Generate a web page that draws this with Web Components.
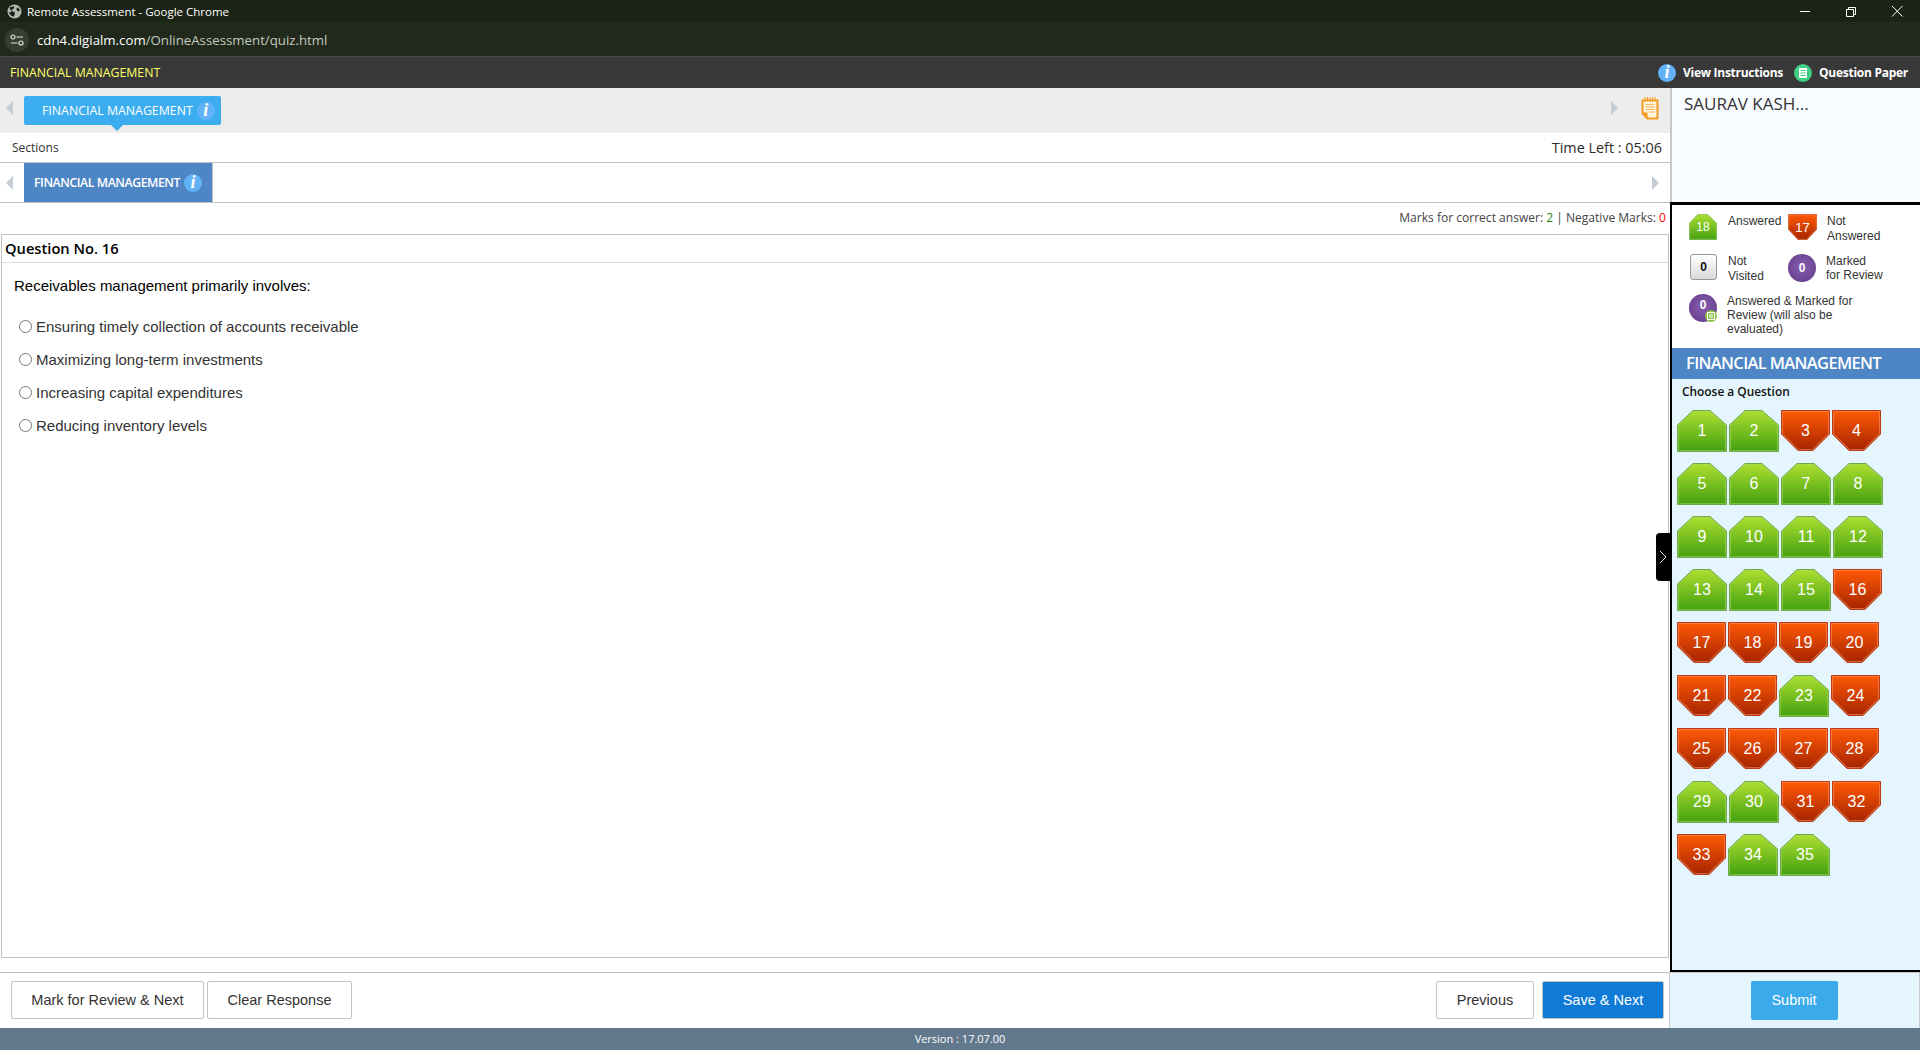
<!DOCTYPE html>
<html lang="en">
<head>
<meta charset="utf-8">
<title>Remote Assessment</title>
<style>
    html, body { margin: 0; height: 100%; }
    body { width: 1920px; height: 1050px; overflow: hidden; display: flex; flex-direction: column; font-family: "Liberation Sans", Arial, sans-serif; background: #fff; }
    .main { display: flex; height: 884px; }
</style>
</head>
<body>
<chrome-bar></chrome-bar>
<exam-header></exam-header>
<div class="main">
    <quiz-pane></quiz-pane>
    <side-panel></side-panel>
</div>
<action-bar></action-bar>
<version-footer></version-footer>

<script>
class ShadowBase extends HTMLElement {
    constructor() {
        super();
        this.attachShadow({ mode: 'open' });
    }
    connectedCallback() {
        this.render();
    }
}

class ChromeBar extends ShadowBase {
    render() {
        this.shadowRoot.innerHTML = `
            <style>
                :host { display: block; font-family: "Open Sans", sans-serif; color: #fff; }
                .title { height: 23px; background: #1a2314; display: flex; align-items: center; padding-left: 7px; font-size: 11.5px; box-sizing: border-box; border-bottom: 1px solid #222b1c; }
                .title span { margin-left: 5px; }
                .win { margin-left: auto; display: flex; }
                .win svg { width: 46px; height: 22px; display: block; }
                .addr { height: 34px; background: #20291b; display: flex; align-items: center; padding-left: 5px; box-sizing: border-box; border-bottom: 1px solid #4a4a4a; }
                .tune { width: 24px; height: 24px; border-radius: 50%; background: #363e31; display: flex; align-items: center; justify-content: center; }
                .url { margin-left: 8px; font-size: 13.25px; color: #c4cabf; }
                .url b { font-weight: 400; color: #fff; }
            </style>
            <div class="title">
                <svg width="15" height="15" viewBox="0 0 16 16"><circle cx="8" cy="8" r="7.5" fill="#b4b8b2"/><path d="M3 3.500c2-1 4-1 5-.5l-1 2-2 1 1 2 2 .5.5 2-1.500 3C4.500 13 2.500 11 2 8.500c1 0 1.500.5 2 .5L5 7 3 5.500z" fill="#1a2314"/><path d="M11 3.500l2.500 2L13 8l-2-.5-1-2z" fill="#1a2314"/></svg>
                <span>Remote Assessment - Google Chrome</span>
                <div class="win">
                    <svg viewBox="0 0 46 22"><path d="M18 11.500h10" stroke="#fff" fill="none"/></svg>
                    <svg viewBox="0 0 46 22"><path d="M18.500 9.500h7v7h-7zM20.500 9.500v-2h7v7h-2" stroke="#fff" fill="none"/></svg>
                    <svg viewBox="0 0 46 22"><path d="M18 6l10.500 10.500M28.500 6L18 16.500" stroke="#fff" fill="none"/></svg>
                </div>
            </div>
            <div class="addr">
                <div class="tune">
                    <svg width="14" height="12" viewBox="0 0 14 12"><circle cx="3" cy="3" r="2" fill="none" stroke="#dfe3dc" stroke-width="1.200"/><path d="M6.500 3H13M1 9h6.500" stroke="#dfe3dc" stroke-width="1.200"/><circle cx="11" cy="9" r="2" fill="none" stroke="#dfe3dc" stroke-width="1.200"/></svg>
                </div>
                <div class="url"><b>cdn4.digialm.com</b>/OnlineAssessment/quiz.html</div>
            </div>`;
    }
}

class InfoDot extends ShadowBase {
    render() {
        this.shadowRoot.innerHTML = `
            <style>
                :host { display: inline-flex; width: 18px; height: 18px; border-radius: 50%; background: #62b2f7; color: #fff; align-items: center; justify-content: center; font: italic bold 18px "Liberation Serif", serif; flex: none; letter-spacing: 0; }
            </style>i`;
    }
}

class ExamHeader extends ShadowBase {
    render() {
        this.shadowRoot.innerHTML = `
            <style>
                :host { display: flex; align-items: center; height: 31px; background: #383838; padding: 0 12px 0 10px; font: 12.3px "Open Sans", sans-serif; color: #ffff66; }
                .right { margin-left: auto; display: flex; align-items: center; color: #fff; font-weight: 700; font-size: 12px; letter-spacing: -.27px; }
                info-dot { margin-right: 7px; }
                .paper { width: 18px; height: 18px; border-radius: 50%; background: #3fcf82; display: flex; align-items: center; justify-content: center; margin: 0 7px 0 11px; }
            </style>
            <span>FINANCIAL MANAGEMENT</span>
            <div class="right">
                <info-dot></info-dot><span>View Instructions</span>
                <span class="paper"><svg width="10" height="10" viewBox="0 0 10 10"><path fill="#fff" d="M1 0h8v10H1z"/><path stroke="#3fcf82" d="M2.500 2.500h5M2.500 5h5M2.500 7.500h5"/></svg></span><span>Question Paper</span>
            </div>`;
    }
}

class ArrowMark extends ShadowBase {
    render() {
        const left = this.getAttribute('dir') === 'left';
        this.shadowRoot.innerHTML = `
            <style>:host { display: block; flex: none; width: 7px; height: 14px; line-height: 0; }</style>
            <svg width="7" height="14" viewBox="0 0 7 14"><path fill="#c4cdd6" d="${left ? 'M7 0v14L0 7z' : 'M0 0v14l7-7z'}"/></svg>`;
    }
}

class QuizPane extends ShadowBase {
    render() {
        this.shadowRoot.innerHTML = `
            <style>
                :host { display: flex; flex-direction: column; width: 1670px; height: 100%; font-family: "Open Sans", sans-serif; color: #333; box-sizing: border-box; }
                .group { height: 45px; background: #ececec; display: flex; align-items: center; padding: 0 11px 5px 6px; box-sizing: border-box; flex: none; }
                .group-tab { position: relative; margin: 5px 0 0 11px; height: 29px; width: 197px; background: #3caef0; border-radius: 2px; color: #fff; display: flex; align-items: center; padding-left: 18px; box-sizing: border-box; font-size: 12.35px; }
                .group-tab::after { content: ""; position: absolute; left: 87px; top: 100%; border: 6px solid transparent; border-top-color: #3caef0; border-bottom: 0; }
                .group-tab info-dot { margin-left: 4px; }
                .group .next { margin-left: auto; margin-right: 23px; }
                .group svg { display: block; }
                .sections { height: 30px; border-bottom: 1px solid #c0c0c0; display: flex; align-items: center; justify-content: space-between; padding: 0 8px 0 12px; box-sizing: border-box; flex: none; }
                .sections .lbl { font-size: 12px; }
                .sections .time { font-size: 14.4px; font-weight: 500; color: #2b2b2b; }
                .tabs { height: 40px; border-bottom: 1px solid #c0c0c0; display: flex; align-items: center; padding: 0 11px 0 6px; box-sizing: border-box; flex: none; }
                .tabs .tab { align-self: stretch; margin-left: 11px; width: 189px; background: #4e85c5; border-right: 1px solid #c0c0c0; color: #fff; display: flex; align-items: center; padding-left: 10px; box-sizing: border-box; font-size: 12.3px; font-weight: 600; letter-spacing: -.45px; }
                .tabs .tab info-dot { margin-left: 4px; }
                .tabs .next { margin-left: auto; }
                .marks { height: 31px; text-align: right; font-size: 12.05px; line-height: 29px; padding-right: 4px; color: #444; flex: none; }
                .marks .g { color: #1b8a1b; } .marks .r { color: #f00; }
                .panel { flex: 1; margin: 0 1px 14px 1px; border: 1px solid #c0c0c0; min-height: 0; }
                .qno { height: 27px; line-height: 26px; border-bottom: 1px solid #ddd; padding-left: 3px; font-size: 14.7px; font-weight: 600; color: #000; }
                .text { font: 15px "Liberation Sans", Arial, sans-serif; color: #000; padding: 14px 0 0 12px; line-height: 17px; margin-bottom: 24px; }
                quiz-option + quiz-option { margin-top: 16px; }
            </style>
            <div class="group">
                <arrow-mark dir="left"></arrow-mark>
                <div class="group-tab">FINANCIAL MANAGEMENT<info-dot></info-dot></div>
                <arrow-mark class="next"></arrow-mark>
                <svg width="18" height="23" viewBox="0 0 18 23"><path d="M1.500 3.500h15v18H6.500l-5-5z" fill="#fff3d8" stroke="#f59a1e" stroke-width="2" stroke-linejoin="round"/><path d="M1.500 15.500h5v6z" fill="#f59a1e"/><path d="M4.500 7.500h9M4.500 10h9M4.500 12.500h9M7.500 15h6" stroke="#f7b866" stroke-width="1.200"/><path d="M4 0v3M6.500 0v3M9 0v3M11.500 0v3M14 0v3" stroke="#f59a1e"/></svg>
            </div>
            <div class="sections"><span class="lbl">Sections</span><span class="time">Time Left : 05:06</span></div>
            <div class="tabs">
                <arrow-mark dir="left"></arrow-mark>
                <div class="tab">FINANCIAL MANAGEMENT<info-dot></info-dot></div>
                <arrow-mark class="next"></arrow-mark>
            </div>
            <div class="marks">Marks for correct answer: <span class="g">2</span> | Negative Marks: <span class="r">0</span></div>
            <div class="panel">
                <div class="qno">Question No. 16</div>
                <div class="text">Receivables management primarily involves:</div>
                <quiz-option>Ensuring timely collection of accounts receivable</quiz-option>
                <quiz-option>Maximizing long-term investments</quiz-option>
                <quiz-option>Increasing capital expenditures</quiz-option>
                <quiz-option>Reducing inventory levels</quiz-option>
            </div>`;
    }
}

class QuizOption extends ShadowBase {
    render() {
        this.shadowRoot.innerHTML = `
            <style>
                :host { display: flex; align-items: center; height: 17px; padding-left: 17px; font: 15px "Liberation Sans", Arial, sans-serif; color: #333; }
                i { width: 11px; height: 11px; border: 1px solid #767676; border-radius: 50%; background: #fff; margin-right: 4px; flex: none; }
            </style>
            <i></i><slot></slot>`;
    }
}

const BADGE_SHAPES = {
    green: {
        w: 50, h: 42, top: '#aedf30', bot: '#43a010', edge: '#6fa84f', inner: '#a4d860',
        outer: '16,.5 33,.5 49.5,15 49.5,41.5 .5,41.5 .5,15',
        line: '16.5,1.5 32.5,1.5 48.5,15.5 48.5,40.5 1.5,40.5 1.5,15.5'
    },
    red: {
        w: 49, h: 41, top: '#ff5a06', bot: '#a62400', edge: '#b83a16', inner: '#ff9a6a',
        outer: '.5,.5 48.5,.5 48.5,24 32,40.5 17,40.5 .5,24',
        line: '1.5,1.5 47.5,1.5 47.5,23.5 31.5,39.5 17.5,39.5 1.5,23.5'
    }
};

class QBadge extends ShadowBase {
    render() {
        const state = this.getAttribute('state') || 'green';
        const s = BADGE_SHAPES[state];
        const w = this.getAttribute('w') || s.w;
        const h = this.getAttribute('h') || s.h;
        const boxH = this.getAttribute('h') || 42;
        const size = this.getAttribute('size') || 16;
        this.shadowRoot.innerHTML = `
            <style>
                :host { display: flex; flex: none; position: relative; width: ${w}px; height: ${boxH}px; align-items: center; justify-content: center; color: #fff; font: ${size}px "Liberation Sans", Arial, sans-serif; }
                svg { position: absolute; left: 0; top: 0; }
                span { position: relative; }
            </style>
            <svg width="${w}" height="${h}" viewBox="0 0 ${s.w} ${s.h}" preserveAspectRatio="none">
                <defs><linearGradient id="g" x1="0" y1="0" x2="0" y2="1"><stop offset="0" stop-color="${s.top}"/><stop offset="1" stop-color="${s.bot}"/></linearGradient></defs>
                <polygon points="${s.outer}" fill="url(#g)" stroke="${s.edge}"/>
                <polygon points="${s.line}" fill="none" stroke="${s.inner}" stroke-opacity=".55"/>
            </svg>
            <span><slot></slot></span>`;
    }
}

class LegendItem extends ShadowBase {
    render() {
        const lh = this.getAttribute('lh') || 14;
        const gap = this.getAttribute('gap') || 10;
        this.shadowRoot.innerHTML = `
            <style>
                :host { display: flex; font: 12px/${lh}px "Liberation Sans", Arial, sans-serif; color: #333; align-items: flex-start; }
                .icon { width: 29px; flex: none; display: flex; }
                .txt { margin-left: ${gap}px; }
            </style>
            <div class="icon"><slot name="icon"></slot></div>
            <div class="txt"><slot></slot></div>`;
    }
}

class PurpleDot extends ShadowBase {
    render() {
        const tick = this.hasAttribute('answered');
        this.shadowRoot.innerHTML = `
            <style>
                :host { display: flex; position: relative; width: 28px; height: 28px; border-radius: 50%; background: radial-gradient(circle at 50% 45%, #8a5cb0, #5f3a85); color: #fff; font: bold 12px "Liberation Sans", Arial, sans-serif; align-items: center; justify-content: center; }
                .t { position: absolute; right: 0; bottom: 0; width: 12px; height: 12px; border-radius: 50%; background: #8bc34a; display: flex; align-items: center; justify-content: center; }
                .n { margin-top: ${tick ? '-6px' : '-1px'}; }
            </style>
            <span class="n"><slot></slot></span>
            ${tick ? '<span class="t"><svg width="8" height="8" viewBox="0 0 8 8"><path fill="none" stroke="#fff" d="M.5.500h7v7h-7zM2 3h4M2 5h4"/></svg></span>' : ''}`;
    }
}

class SidePanel extends ShadowBase {
    render() {
        const red = [3, 4, 16, 17, 18, 19, 20, 21, 22, 24, 25, 26, 27, 28, 31, 32, 33];
        let grid = '';
        for (let i = 1; i <= 35; i++) {
            grid += `<q-badge state="${red.includes(i) ? 'red' : 'green'}">${i}</q-badge>`;
        }
        this.shadowRoot.innerHTML = `
            <style>
                :host { display: flex; flex-direction: column; width: 250px; height: 100%; box-sizing: border-box; font-family: "Open Sans", sans-serif; position: relative; }
                .profile { height: 114px; flex: none; background: #f8fbff; border-left: 2px solid #c8c8c8; box-sizing: border-box; padding: 4px 0 0 12px; font-size: 17px; color: #333; }
                .box { flex: 1; min-height: 0; display: flex; flex-direction: column; border-top: 3px solid #000; border-bottom: 2px solid #000; border-left: 2px solid #000; }
                .legend { height: 143px; flex: none; background: #fff; padding-top: 9px; box-sizing: border-box; }
                .row { display: flex; padding-left: 17px; }
                .row legend-item:first-child { width: 99px; }
                .row.t2 { margin-top: 11px; }
                .row.t3 { margin-top: 10px; }
                .sq { width: 25px; height: 24px; margin-left: 1px; border: 1px solid #999; border-radius: 3px; background: linear-gradient(#fff, #d9d9d9); color: #111; font: bold 12px "Liberation Sans", Arial, sans-serif; display: flex; align-items: center; justify-content: center; }
                h2 { margin: 0; height: 31px; line-height: 30px; background: #4e85c5; color: #fff; font-size: 16.5px; font-weight: 600; padding-left: 14px; flex: none; letter-spacing: -.65px; }
                .list { flex: 1; background: #e4f5fd; min-height: 0; }
                .choose { font-size: 11.9px; font-weight: 600; color: #111; padding: 4px 0 0 10px; height: 21px; line-height: 16px; }
                .grid { display: flex; flex-wrap: wrap; width: 215px; gap: 11px 2px; margin: 6px 0 0 5px; }
                .handle { position: absolute; left: -14px; top: 445px; width: 14px; height: 48px; background: #000; border-radius: 4px 0 0 4px; display: flex; align-items: center; justify-content: center; }
            </style>
            <div class="profile">SAURAV KASH...</div>
            <div class="box">
                <div class="legend">
                    <div class="row">
                        <legend-item lh="14.67"><q-badge slot="icon" state="green" w="28" h="26" size="12">18</q-badge>Answered</legend-item>
                        <legend-item lh="14.67"><q-badge slot="icon" state="red" w="29" h="26" size="13">17</q-badge>Not<br>Answered</legend-item>
                    </div>
                    <div class="row t2">
                        <legend-item lh="14.67"><div slot="icon" class="sq">0</div>Not<br>Visited</legend-item>
                        <legend-item gap="9"><purple-dot slot="icon">0</purple-dot>Marked<br>for Review</legend-item>
                    </div>
                    <div class="row t3">
                        <legend-item gap="9" style="width:190px"><purple-dot slot="icon" answered>0</purple-dot>Answered &amp; Marked for<br>Review (will also be<br>evaluated)</legend-item>
                    </div>
                </div>
                <h2>FINANCIAL MANAGEMENT</h2>
                <div class="list">
                    <div class="choose">Choose a Question</div>
                    <div class="grid">${grid}</div>
                </div>
            </div>
            <div class="handle"><svg width="8" height="14" viewBox="0 0 8 14"><path d="M1 1l6 6-6 6" fill="none" stroke="#ddd"/></svg></div>`;
    }
}

class ActionBar extends ShadowBase {
    render() {
        this.shadowRoot.innerHTML = `
            <style>
                :host { display: flex; height: 56px; flex: none; font: 14.5px "Liberation Sans", Arial, sans-serif; }
                .left { width: 1669px; flex: none; display: flex; align-items: center; border-top: 1px solid #c0c0c0; padding: 0 5px 1px 11px; box-sizing: border-box; }
                .right { flex: 1; background: #e4f5fd; border: 1px solid #c8c8c8; border-bottom: 0; padding-bottom: 1px; display: flex; align-items: center; justify-content: center; box-sizing: border-box; }
                .btn { height: 38px; box-sizing: border-box; display: flex; align-items: center; justify-content: center; border: 1px solid #c4c4c4; border-radius: 2px; color: #333; background: #fff; }
                .spacer { flex: 1; }
                .save { background: #0f7bd6; color: #fff; width: 122px; margin-left: 8px; }
                .submit { background: #3aaaea; color: #fff; border: 0; width: 87px; height: 39px; margin-left: -1px; }
            </style>
            <div class="left">
                <div class="btn" style="width:193px">Mark for Review &amp; Next</div>
                <div class="btn" style="width:145px;margin-left:3px">Clear Response</div>
                <div class="spacer"></div>
                <div class="btn" style="width:98px">Previous</div>
                <div class="btn save">Save &amp; Next</div>
            </div>
            <div class="right"><div class="btn submit">Submit</div></div>`;
    }
}

class VersionFooter extends ShadowBase {
    render() {
        this.shadowRoot.innerHTML = `
            <style>
                :host { display: flex; height: 22px; flex: none; background: #62788c; color: #fff; font: 11px "Open Sans", sans-serif; align-items: center; justify-content: center; padding-bottom: 1px; box-sizing: border-box; }
            </style>
            Version : 17.07.00`;
    }
}

customElements.define('chrome-bar', ChromeBar);
customElements.define('info-dot', InfoDot);
customElements.define('exam-header', ExamHeader);
customElements.define('arrow-mark', ArrowMark);
customElements.define('quiz-option', QuizOption);
customElements.define('quiz-pane', QuizPane);
customElements.define('q-badge', QBadge);
customElements.define('legend-item', LegendItem);
customElements.define('purple-dot', PurpleDot);
customElements.define('side-panel', SidePanel);
customElements.define('action-bar', ActionBar);
customElements.define('version-footer', VersionFooter);
</script>
</body>
</html>
